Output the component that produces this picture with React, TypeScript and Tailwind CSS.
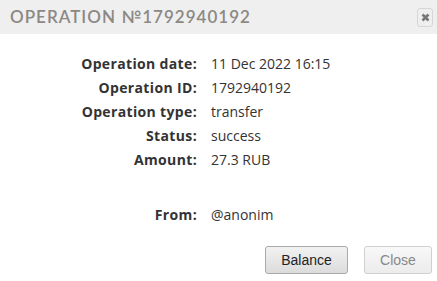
export default function App() {
  const rows: [string, string][] = [
    ['Operation date:', '11 Dec 2022 16:15'],
    ['Operation ID:', '1792940192'],
    ['Operation type:', 'transfer'],
    ['Status:', 'success'],
    ['Amount:', '27.3 RUB'],
  ];

  return (
    <div className="w-[437px] h-[281px] bg-white overflow-hidden" style={{ fontFamily: '"Open Sans", sans-serif' }}>
      <div className="h-[34px] bg-[#efefef] flex items-center justify-between pl-[10px] pr-[4px]">
        <div className="text-[17px] tracking-[0.06em] text-[#8c8884] font-['Lato',sans-serif] font-semibold">
          OPERATION №1792940192
        </div>
        <button className="w-[16px] h-[19px] border border-[#d6d6d6] rounded-[3px] bg-[#efefef] flex items-center justify-center">
          <svg width="9" height="9" viewBox="0 0 9 9">
            <path d="M1.5 1.5L7.5 7.5M7.5 1.5L1.5 7.5" stroke="#777" strokeWidth="2.6" />
          </svg>
        </button>
      </div>

      <div className="pt-[17px] text-[14px] text-[#333]">
        {rows.map(([k, v]) => (
          <div key={k} className="flex h-[24px] items-center">
            <div className="w-[197px] text-right font-bold tracking-[0.025em]">{k}</div>
            <div className="pl-[14px]">{v}</div>
          </div>
        ))}
        <div className="flex h-[24px] items-center mt-[31px]">
          <div className="w-[197px] text-right font-bold tracking-[0.025em]">From:</div>
          <div className="pl-[14px]">@anonim</div>
        </div>
      </div>

      <div className="flex justify-end gap-[16px] pr-[5px] mt-[20px] font-['Liberation_Sans',sans-serif] text-[14px]">
        <button className="w-[83px] h-[28px] rounded-[3px] border border-[#aaa] bg-gradient-to-b from-[#f2f2f2] to-[#dcdcdc] text-[#222]">
          Balance
        </button>
        <button className="w-[68px] h-[28px] rounded-[3px] border border-[#d0d0d0] bg-gradient-to-b from-[#f8f8f8] to-[#ececec] text-[#888]">
          Close
        </button>
      </div>
    </div>
  );
}
